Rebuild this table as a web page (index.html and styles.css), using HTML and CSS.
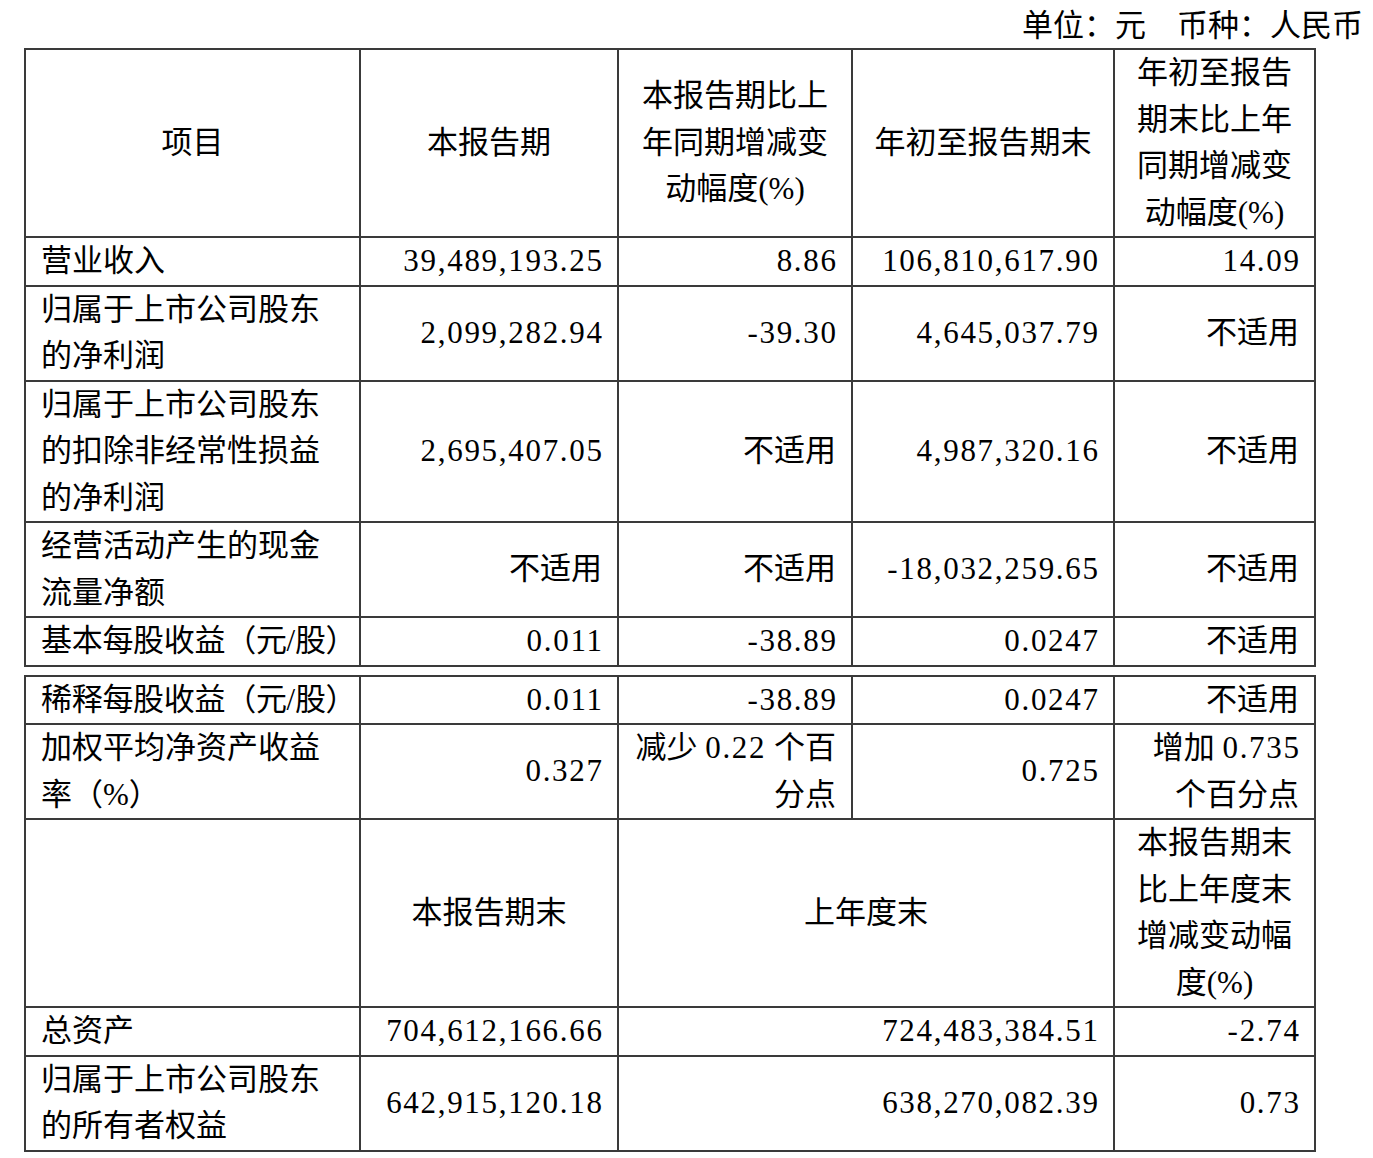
FILE: index.html
```html
<!DOCTYPE html>
<html lang="zh-CN">
<head>
<meta charset="utf-8">
<title>主要会计数据和财务指标</title>
<link rel="stylesheet" href="styles.css">
</head>
<body>
<div class="page">
  <div class="unit">单位：元　币种：人民币</div>
  <table class="fin">
    <colgroup><col class="c1"><col class="c2"><col class="c3"><col class="c4"><col class="c5"></colgroup>
    <tr>
      <th>项目</th>
      <th>本报告期</th>
      <th>本报告期比上<br>年同期增减变<br>动幅度(%)</th>
      <th>年初至报告期末</th>
      <th>年初至报告<br>期末比上年<br>同期增减变<br>动幅度(%)</th>
    </tr>
    <tr>
      <td class="l">营业收入</td>
      <td class="r"><span class="n">39,489,193.25</span></td>
      <td class="r"><span class="n">8.86</span></td>
      <td class="r"><span class="n">106,810,617.90</span></td>
      <td class="r"><span class="n">14.09</span></td>
    </tr>
    <tr>
      <td class="l">归属于上市公司股东的净利润</td>
      <td class="r"><span class="n">2,099,282.94</span></td>
      <td class="r"><span class="n">-39.30</span></td>
      <td class="r"><span class="n">4,645,037.79</span></td>
      <td class="r">不适用</td>
    </tr>
    <tr>
      <td class="l">归属于上市公司股东的扣除非经常性损益的净利润</td>
      <td class="r"><span class="n">2,695,407.05</span></td>
      <td class="r">不适用</td>
      <td class="r"><span class="n">4,987,320.16</span></td>
      <td class="r">不适用</td>
    </tr>
    <tr>
      <td class="l">经营活动产生的现金流量净额</td>
      <td class="r">不适用</td>
      <td class="r">不适用</td>
      <td class="r"><span class="n">-18,032,259.65</span></td>
      <td class="r">不适用</td>
    </tr>
    <tr>
      <td class="l tight">基本每股收益（元/股）</td>
      <td class="r"><span class="n">0.011</span></td>
      <td class="r"><span class="n">-38.89</span></td>
      <td class="r"><span class="n">0.0247</span></td>
      <td class="r">不适用</td>
    </tr>
  </table>
  <table class="fin">
    <colgroup><col class="c1"><col class="c2"><col class="c3"><col class="c4"><col class="c5"></colgroup>
    <tr>
      <td class="l tight">稀释每股收益（元/股）</td>
      <td class="r"><span class="n">0.011</span></td>
      <td class="r"><span class="n">-38.89</span></td>
      <td class="r"><span class="n">0.0247</span></td>
      <td class="r">不适用</td>
    </tr>
    <tr>
      <td class="l">加权平均净资产收益率（%）</td>
      <td class="r"><span class="n">0.327</span></td>
      <td class="r">减少 <span class="n mid">0.22</span> 个百<br>分点</td>
      <td class="r"><span class="n">0.725</span></td>
      <td class="r">增加 <span class="n">0.735</span><br>个百分点</td>
    </tr>
    <tr>
      <th></th>
      <th>本报告期末</th>
      <th colspan="2">上年度末</th>
      <th>本报告期末<br>比上年度末<br>增减变动幅<br>度(%)</th>
    </tr>
    <tr>
      <td class="l">总资产</td>
      <td class="r"><span class="n">704,612,166.66</span></td>
      <td class="r" colspan="2"><span class="n">724,483,384.51</span></td>
      <td class="r"><span class="n">-2.74</span></td>
    </tr>
    <tr>
      <td class="l">归属于上市公司股东的所有者权益</td>
      <td class="r"><span class="n">642,915,120.18</span></td>
      <td class="r" colspan="2"><span class="n">638,270,082.39</span></td>
      <td class="r"><span class="n">0.73</span></td>
    </tr>
  </table>
</div>
</body>
</html>
```
FILE: styles.css
```css
html, body {
  margin: 0;
  padding: 0;
  background: #ffffff;
}

body {
  color: #000000;
  font-family: "Liberation Serif", "Noto Sans CJK SC", serif;
  font-size: 31px;
}

.page {
  padding: 0 10px 0 24px;
}

.unit {
  text-align: right;
  height: 48px;
  line-height: 52px;
}

.fin {
  border-collapse: separate;
  border-spacing: 0;
  table-layout: fixed;
  width: 1292px;
  border-top: 2px solid #3a3a3a;
  border-left: 2px solid #3a3a3a;
}

.fin + .fin {
  margin-top: 8px;
}

.c1 { width: 335px; }
.c2 { width: 258px; }
.c3 { width: 234px; }
.c4 { width: 262px; }
.c5 { width: 201px; }

.fin th,
.fin td {
  padding: 0 15px;
  line-height: 46.5px;
  border-right: 2px solid #3a3a3a;
  border-bottom: 2px solid #3a3a3a;
  vertical-align: middle;
  font-weight: normal;
}

.fin th {
  text-align: center;
}

.fin .l {
  text-align: left;
}

.fin .r {
  text-align: right;
}

.fin .tight {
  letter-spacing: -0.3px;
  padding-right: 0;
  white-space: nowrap;
}

.n {
  letter-spacing: 1.7px;
  margin-right: -1.7px;
}

.n.mid {
  margin-right: 0;
}
```
